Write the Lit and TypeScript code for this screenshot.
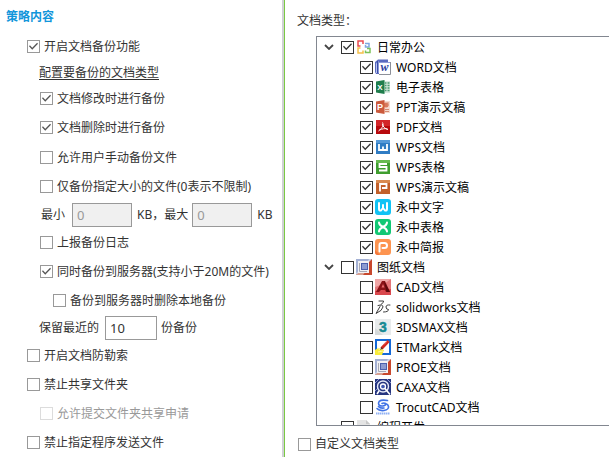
import { LitElement, html, svg, css, nothing, type TemplateResult, type SVGTemplateResult } from "lit";
import { customElement, property } from "lit/decorators.js";
import { classMap } from "lit/directives/class-map.js";

const proeIcon = svg`
  <rect width="16" height="16" fill="#c9d0e4"/>
  <path d="M0 0H13L11 3H3V12L0 14Z" fill="#a3b0d4"/>
  <path d="M16 0V16H0L4 13.5H13V3Z" fill="#c8472c"/>
  <path d="M0 16L3 13.5H9L7 16Z" fill="#d9a090"/>
  <rect x="2" y="2" width="11" height="12" fill="#f1f1f4"/>
  <rect x="5" y="4" width="7" height="7" fill="#4b60ac"/>
  <rect x="6" y="5" width="5" height="5" fill="#8c9bd0"/>
  <path d="M3.5 4V12.5H11" stroke="#a9a9b4" fill="none"/>`;

const icons: Record<string, SVGTemplateResult> = {
  office: svg`
    <g fill="none" stroke-width="1.5">
      <path d="M7 5V2H2V7H4.5" stroke="#ea4a4f"/>
      <path d="M9 4.500H13V8H9.500V6" stroke="#7fa8e0"/>
      <path d="M4.500 9H2V14H7V11.500" stroke="#f5c04a"/>
      <path d="M11 9.500H14V13.500H9.500V11.500" stroke="#7cc25a"/>
    </g>`,
  word: svg`
    <path d="M0 3L3 0.5H13V3H4V15H1L0 13Z" fill="#5b6cc0"/>
    <path d="M1 4.5L3.5 2V14H1Z" fill="#b9c3ee"/>
    <path d="M2.5 2V14" stroke="#3a4da8"/>
    <rect x="4" y="3" width="11" height="12" fill="#fff"/>
    <path d="M4 3.5H15" stroke="#8f9bd6"/>
    <path d="M4 15.5H15.5V3" stroke="#8d9099" fill="none"/>
    <text x="9.5" y="12" text-anchor="middle" font-family="Liberation Serif, serif" font-style="italic" font-weight="700" font-size="12" fill="#2b3f9e">w</text>`,
  excel: svg`
    <rect x="8" y="2" width="7" height="12" fill="#d6eadf"/>
    <path d="M10 4H11.5M10 6.5H11.5M10 9H11.5M10 11.5H11.5M12.5 4H14.5M12.5 6.5H14.5M12.5 9H14.5M12.5 11.5H14.5" stroke="#4a9a72" stroke-width="1.5"/>
    <path d="M1 2.5L9.5 1V15L1 13.5Z" fill="#1f7d4c"/>
    <text x="5" y="11" text-anchor="middle" font-family="Liberation Sans, sans-serif" font-weight="700" font-size="8" fill="#fff">X</text>`,
  ppt: svg`
    <rect x="8" y="2" width="7" height="12" fill="#f6dcd0"/>
    <circle cx="11" cy="6" r="2.5" fill="#d9795a"/>
    <path d="M10 10.5H14M10 12.5H14M13 3V7" stroke="#d58a70"/>
    <path d="M1 2.5L9.5 1V15L1 13.5Z" fill="#cb5a3c"/>
    <text x="5" y="11" text-anchor="middle" font-family="Liberation Sans, sans-serif" font-weight="700" font-size="9" fill="#fff">P</text>`,
  pdf: svg`
    <rect x="1" y="1" width="14" height="14" fill="#b8090d"/>
    <rect x="1" y="1" width="14" height="6" fill="#d3262a"/>
    <path d="M7.5 3.5C8.8 6 7.5 9 3.5 12M7.5 5C8 8 10 9.8 13 10.5M4.5 11C7 9.8 10 9.3 12.5 10" stroke="#fff" fill="none"/>`,
  wpsDoc: svg`
    <rect x="1" y="1" width="14" height="14" fill="#2f7cc4"/>
    <rect x="1" y="1" width="14" height="3" fill="#5599d8"/>
    <path d="M4 5V11H8V7.5V11H12V5" fill="none" stroke="#fff" stroke-width="1.8"/>`,
  wpsSheet: svg`
    <rect x="1" y="1" width="14" height="14" fill="#3f9e2f"/>
    <rect x="1" y="1" width="14" height="3" fill="#66bb50"/>
    <path d="M12 5H4.5V8H11.5V11.5H4" fill="none" stroke="#fff" stroke-width="1.8"/>`,
  wpsShow: svg`
    <rect x="1" y="1" width="14" height="14" fill="#c2602a"/>
    <rect x="1" y="1" width="14" height="3" fill="#d98a50"/>
    <path d="M5 12.5V5H11.5V9H7" fill="none" stroke="#fff" stroke-width="1.8"/>`,
  yozoDoc: svg`
    <rect width="16" height="16" rx="3" fill="#12c3f5"/>
    <path d="M4 4V10Q4 12 6 11.5L8 9V6V9L10 11.5Q12 12 12 10V4" fill="none" stroke="#fff" stroke-width="2" stroke-linecap="round" stroke-linejoin="round"/>`,
  yozoSheet: svg`
    <rect width="16" height="16" rx="3" fill="#12c874"/>
    <path d="M4 3.5Q4 6 8 8T12 12.5M12 3.5Q12 6 8 8T4 12.5" fill="none" stroke="#fff" stroke-width="2" stroke-linecap="round"/>`,
  yozoShow: svg`
    <rect width="16" height="16" rx="3" fill="#fd9450"/>
    <path d="M0 11L5 16H3Q0 16 0 13Z" fill="#f5763a"/>
    <path d="M4.5 12.5V6Q4.5 4 6.500 4H9.500Q12 4 12 6.5T9.5 9H7.5" fill="none" stroke="#fff" stroke-width="2" stroke-linecap="round"/>`,
  drawing: proeIcon,
  cad: svg`
    <rect width="16" height="16" fill="#e4777a"/>
    <path d="M0 0H16L9 5L0 8Z" fill="#f0a6a6"/>
    <path d="M0 16V12L16 10V16Z" fill="#d9484d"/>
    <path d="M7 2H10L15 13H11L10 11H6L4 13H1Z" fill="#8b1217"/>
    <path d="M8 5L9.5 8.5H6.5Z" fill="#e9686b"/>
    <path d="M9 2L15 13H11.5Z" fill="#5b090c"/>`,
  solidworks: svg`
    <g fill="none" stroke="#3c3c3c" stroke-linecap="round">
      <path d="M4 2H8.5Q9.5 3 6 5.5"/>
      <path d="M3 6.5Q8 5 8 8Q7.5 11.5 1 14.5L5 7.5"/>
      <path d="M15 6Q11 5.5 11 8T13.5 10.5Q13.5 13 8.5 13"/>
    </g>`,
  max3ds: svg`
    <rect width="16" height="16" fill="#e8ebec"/>
    <path d="M0 16V9L8 16Z" fill="#d6dadb"/>
    <text x="8" y="13" text-anchor="middle" font-family="Liberation Sans, sans-serif" font-weight="700" font-size="14" fill="#178a94" stroke="#178a94" stroke-width="0.5">3</text>`,
  etmark: svg`
    <rect x="1" y="1" width="14" height="14" fill="#fff" stroke="#1469d8" stroke-width="2"/>
    <path d="M0 11L3 9L9 11L7 16H0Z" fill="#f8ec3c"/>
    <path d="M2 9L6 11M3 13L8 12" stroke="#fff9a0"/>
    <path d="M6.5 9.5L13.5 2" stroke="#d3281f" stroke-width="3"/>
    <path d="M9 5.5L12 2" stroke="#f0887e"/>
    <path d="M5 11L8 9.5L6.5 8Z" fill="#4a3428"/>`,
  proe: proeIcon,
  caxa: svg`
    <rect width="16" height="16" fill="#26357f"/>
    <path d="M0 4L4 0M0 12L3 9M12 0L16 4" stroke="#8b97cf"/>
    <circle cx="8" cy="7.5" r="5.5" fill="none" stroke="#e6eaf8" stroke-width="1.4"/>
    <circle cx="8" cy="7.5" r="2.5" fill="#3e57b0" stroke="#fff" stroke-width="1.3"/>
    <path d="M9.5 9L15 15.5M4 12L2 15" stroke="#fff" stroke-width="1.6"/>`,
  trocut: svg`
    <g fill="none" stroke="#3f72e6" stroke-width="1.6" stroke-linecap="round">
      <path d="M12.5 1.5Q4 0 3.5 4Q3.500 7.500 8 7Q11.500 6 10.500 4.500Q9 3.500 7 4.500"/>
      <path d="M2 9.500Q4 12 9 11.500Q14 10.500 13.500 7.500Q13 5.500 11.500 5M3.500 7.500Q5 9.500 9 9"/>
    </g>
    <path d="M1 14.5H15" stroke="#8fb0f4" stroke-width="2" stroke-dasharray="1.5 0.5"/>`,
  code: svg`
    <path d="M1 1H10L14 5V16H1Z" fill="#e4e4e4"/>
    <path d="M10 1V5H14" fill="#c8c8c8"/>`,
};

interface Leaf { label: string; icon: string; checked: boolean; }
interface Group extends Leaf { children: Leaf[]; }

const leaf = (label: string, icon: string, checked: boolean): Leaf => ({ label, icon, checked });

const groups: Group[] = [
  {
    ...leaf("日常办公", "office", true),
    children: [
      leaf("WORD文档", "word", true),
      leaf("电子表格", "excel", true),
      leaf("PPT演示文稿", "ppt", true),
      leaf("PDF文档", "pdf", true),
      leaf("WPS文档", "wpsDoc", true),
      leaf("WPS表格", "wpsSheet", true),
      leaf("WPS演示文稿", "wpsShow", true),
      leaf("永中文字", "yozoDoc", true),
      leaf("永中表格", "yozoSheet", true),
      leaf("永中简报", "yozoShow", true),
    ],
  },
  {
    ...leaf("图纸文档", "drawing", false),
    children: [
      leaf("CAD文档", "cad", false),
      leaf("solidworks文档", "solidworks", false),
      leaf("3DSMAX文档", "max3ds", false),
      leaf("ETMark文档", "etmark", false),
      leaf("PROE文档", "proe", false),
      leaf("CAXA文档", "caxa", false),
      leaf("TrocutCAD文档", "trocut", false),
    ],
  },
  { ...leaf("编程开发", "code", false), children: [] },
];

const checkStyles = css`
  label {
    display: flex;
    align-items: center;
    white-space: nowrap;
  }
  input[type="checkbox"] {
    appearance: none;
    flex: none;
    display: grid;
    place-items: center;
    box-sizing: border-box;
    width: 13px;
    height: 13px;
    margin: 0;
    border: 1px solid var(--box, #999);
    background: #fff;
  }
  input[type="checkbox"]:checked::before {
    content: "";
    width: 9px;
    height: 9px;
    background: var(--tick, #555);
    clip-path: polygon(0 48%, 10% 37%, 36% 63%, 90% 8%, 100% 19%, 36% 86%);
  }
`;

@customElement("policy-check")
class PolicyCheck extends LitElement {
  @property() label = "";
  @property({ type: Boolean }) checked = false;
  @property({ type: Boolean }) disabled = false;

  static styles = [
    checkStyles,
    css`
      :host { display: flex; }
      label { gap: 4px; }
      .off { color: #999; --box: #dcdcdc; }
    `,
  ];

  render() {
    return html`<label class=${classMap({ off: this.disabled })}>
      <input type="checkbox" .checked=${this.checked} ?disabled=${this.disabled} />
      <span>${this.label}</span>
    </label>`;
  }
}

@customElement("type-tree")
class TypeTree extends LitElement {
  static styles = [
    checkStyles,
    css`
      :host { display: block; color: #000; --box: #333; --tick: #333; }
      ul { list-style: none; margin: 0; padding: 0; }
      .row { display: flex; align-items: center; height: 20px; }
      .group { padding-left: 6px; }
      .leaf { padding-left: 43px; }
      .toggle {
        display: grid;
        place-items: center;
        width: 12px;
        height: 12px;
        margin: 0 6px 0 0;
        padding: 0;
        border: 0;
        background: none;
      }
      .toggle.empty { visibility: hidden; }
      .icon { flex: none; width: 16px; height: 16px; margin: 0 5px 0 2px; }
      span { padding-top: 2px; }
    `,
  ];

  private item(node: Leaf): TemplateResult {
    return html`<label>
      <input type="checkbox" .checked=${node.checked} />
      <svg class="icon" viewBox="0 0 16 16" aria-hidden="true">${icons[node.icon]}</svg>
      <span>${node.label}</span>
    </label>`;
  }

  render() {
    return html`<ul>
      ${groups.map(
        (g) => html`<li>
          <div class="row group">
            <button class=${classMap({ toggle: true, empty: !g.children.length })} aria-label="展开或收起">
              <svg width="10" height="6" viewBox="0 0 10 6" aria-hidden="true">
                <path d="M1 1L5 5L9 1" fill="none" stroke="#444" stroke-width="1.8" />
              </svg>
            </button>
            ${this.item(g)}
          </div>
          ${g.children.length
            ? html`<ul>${g.children.map((c) => html`<li class="row leaf">${this.item(c)}</li>`)}</ul>`
            : nothing}
        </li>`
      )}
    </ul>`;
  }
}

@customElement("app-root")
class AppRoot extends LitElement {
  static styles = css`
    :host {
      display: grid;
      grid-template-columns: 285px minmax(0, 1fr);
      min-height: 100vh;
      background: #fff;
      color: #333;
      font: 12px/20px "Noto Sans", "Noto Sans CJK SC", sans-serif;
    }
    .policy {
      box-sizing: border-box;
      border-right: 1px solid #7ac943;
      box-shadow: inset -2px 0 #d0d0d4;
    }
    h1 {
      margin: 0;
      padding: 2px 0 0 6px;
      font-size: 12px;
      line-height: 30px;
      color: #1296db;
    }
    .row { display: flex; align-items: center; height: 29px; padding-left: 27px; white-space: nowrap; }
    .l2 { padding-left: 40px; }
    .l3 { padding-left: 53px; }
    .link { height: 24px; padding-left: 39px; }
    .triggers { margin: -1px 0 1px; }
    .range { height: 27px; padding-left: 41px; }
    .retain { height: 26px; padding-left: 39px; }
    a { color: inherit; text-decoration: underline; text-underline-offset: 2px; }
    input {
      box-sizing: border-box;
      width: 60px;
      height: 24px;
      margin: 0 5px 0 7px;
      padding: 0 4px;
      border: 1px solid #999;
      border-radius: 0;
      background: #fff;
      color: #333;
      font: inherit;
      font-size: 13px;
    }
    input:disabled { background: #f0f0f0; color: #999; }
    .keep { width: 52px; margin: 0 4px 0 6px; }
    .max { margin-left: 4px; }
    .types { display: flex; flex-direction: column; padding-left: 12px; }
    h2 {
      margin: 0;
      padding-top: 6px;
      font-size: 12px;
      font-weight: 400;
      line-height: 30px;
    }
    .tree {
      flex: 1 1 0;
      min-height: 0;
      margin-left: 19px;
      overflow: auto;
      scrollbar-width: none;
      border: solid #828790;
      border-width: 1px 0 1px 1px;
    }
    .custom { padding: 8px 0 3px 1px; }
  `;

  render() {
    return html`
      <section class="policy">
        <h1>策略内容</h1>
        <policy-check class="row" label="开启文档备份功能" checked></policy-check>
        <div class="row link"><a href="#types">配置要备份的文档类型</a></div>
        <div class="triggers">
          <policy-check class="row l2" label="文档修改时进行备份" checked></policy-check>
          <policy-check class="row l2" label="文档删除时进行备份" checked></policy-check>
        </div>
        <policy-check class="row l2" label="允许用户手动备份文件"></policy-check>
        <policy-check class="row l2" label="仅备份指定大小的文件(0表示不限制)"></policy-check>
        <div class="row range">
          <label for="min">最小</label><input id="min" value="0" disabled />
          <span>KB，</span><label for="max">最大</label><input id="max" class="max" value="0" disabled />
          <span>KB</span>
        </div>
        <policy-check class="row l2" label="上报备份日志"></policy-check>
        <policy-check class="row l2" label="同时备份到服务器(支持小于20M的文件)" checked></policy-check>
        <policy-check class="row l3" label="备份到服务器时删除本地备份"></policy-check>
        <div class="row retain">
          <label for="keep">保留最近的</label><input id="keep" class="keep" value="10" />
          <span>份备份</span>
        </div>
        <policy-check class="row" label="开启文档防勒索"></policy-check>
        <policy-check class="row" label="禁止共享文件夹"></policy-check>
        <policy-check class="row l2" label="允许提交文件夹共享申请" disabled></policy-check>
        <policy-check class="row" label="禁止指定程序发送文件"></policy-check>
      </section>
      <section class="types" id="types">
        <h2>文档类型：</h2>
        <type-tree class="tree"></type-tree>
        <policy-check class="custom" label="自定义文档类型"></policy-check>
      </section>
    `;
  }
}
